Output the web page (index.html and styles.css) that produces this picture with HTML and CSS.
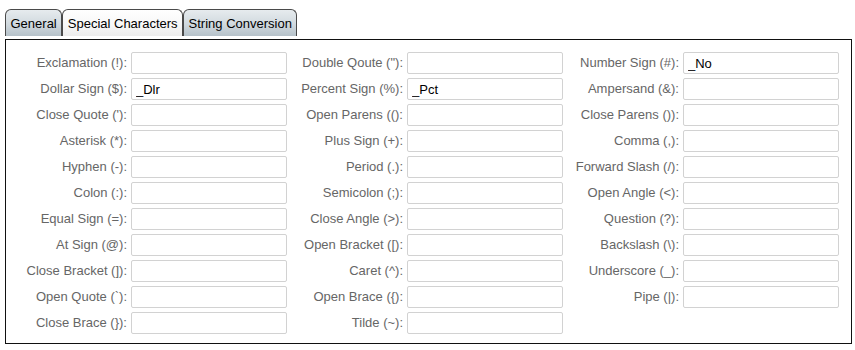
FILE: index.html
```html
<!DOCTYPE html>
<html>
<head>
<meta charset="utf-8">
<link rel="stylesheet" href="styles.css">
</head>
<body>
<div class="tabs">
  <div class="tab">General</div>
  <div class="tab active">Special Characters</div>
  <div class="tab">String Conversion</div>
</div>
<div class="panel">
  <div class="grid">
    <label class="lbl">Exclamation (!):</label><input class="fld" type="text" value="">
    <label class="lbl">Double Qoute ("):</label><input class="fld" type="text" value="">
    <label class="lbl">Number Sign (#):</label><input class="fld" type="text" value="_No">

    <label class="lbl">Dollar Sign ($):</label><input class="fld" type="text" value="_Dlr">
    <label class="lbl">Percent Sign (%):</label><input class="fld" type="text" value="_Pct">
    <label class="lbl">Ampersand (&amp;):</label><input class="fld" type="text" value="">

    <label class="lbl">Close Quote ('):</label><input class="fld" type="text" value="">
    <label class="lbl">Open Parens (():</label><input class="fld" type="text" value="">
    <label class="lbl">Close Parens ()):</label><input class="fld" type="text" value="">

    <label class="lbl">Asterisk (*):</label><input class="fld" type="text" value="">
    <label class="lbl">Plus Sign (+):</label><input class="fld" type="text" value="">
    <label class="lbl">Comma (,):</label><input class="fld" type="text" value="">

    <label class="lbl">Hyphen (-):</label><input class="fld" type="text" value="">
    <label class="lbl">Period (.):</label><input class="fld" type="text" value="">
    <label class="lbl">Forward Slash (/):</label><input class="fld" type="text" value="">

    <label class="lbl">Colon (:):</label><input class="fld" type="text" value="">
    <label class="lbl">Semicolon (;):</label><input class="fld" type="text" value="">
    <label class="lbl">Open Angle (&lt;):</label><input class="fld" type="text" value="">

    <label class="lbl">Equal Sign (=):</label><input class="fld" type="text" value="">
    <label class="lbl">Close Angle (&gt;):</label><input class="fld" type="text" value="">
    <label class="lbl">Question (?):</label><input class="fld" type="text" value="">

    <label class="lbl">At Sign (@):</label><input class="fld" type="text" value="">
    <label class="lbl">Open Bracket ([):</label><input class="fld" type="text" value="">
    <label class="lbl">Backslash (\):</label><input class="fld" type="text" value="">

    <label class="lbl">Close Bracket (]):</label><input class="fld" type="text" value="">
    <label class="lbl">Caret (^):</label><input class="fld" type="text" value="">
    <label class="lbl">Underscore (_):</label><input class="fld" type="text" value="">

    <label class="lbl">Open Quote (`):</label><input class="fld" type="text" value="">
    <label class="lbl">Open Brace ({):</label><input class="fld" type="text" value="">
    <label class="lbl">Pipe (|):</label><input class="fld" type="text" value="">

    <label class="lbl">Close Brace (}):</label><input class="fld" type="text" value="">
    <label class="lbl">Tilde (~):</label><input class="fld" type="text" value="">
  </div>
</div>
</body>
</html>
```

FILE: styles.css
```css
html, body {
  margin: 0;
  padding: 0;
  background: #ffffff;
  font-family: "Liberation Sans", Arial, sans-serif;
  font-size: 13px;
}

.tabs {
  display: flex;
  gap: 0;
  margin: 9px 0 3px 5px;
}

.tab {
  height: 27px;
  box-sizing: border-box;
  padding: 0 4.5px;
  line-height: 27px;
  color: #000;
  border: 1px solid #4a4a4a;
  border-bottom: none;
  border-radius: 6px 6px 0 0;
  background: linear-gradient(to bottom, #e6ebee 0%, #d3dbe0 50%, #b6c2ca 100%);
  white-space: nowrap;
}

.tab.active {
  background: linear-gradient(to bottom, #ffffff 0%, #f7f7f7 60%, #ececec 100%);
}

.panel {
  margin-left: 5px;
  width: 847px;
  box-sizing: border-box;
  border: 1px solid #111;
  padding: 12px 4px 9px 4px;
}

.grid {
  display: grid;
  grid-template-columns: 117px 156px 112px 156px 112px 156px;
  column-gap: 4px;
  row-gap: 4px;
  grid-auto-rows: 22px;
}

.lbl {
  color: #666;
  text-align: right;
  line-height: 22px;
  white-space: nowrap;
}

.fld {
  box-sizing: border-box;
  width: 156px;
  height: 22px;
  margin: 0;
  padding: 0 4px;
  border: 1px solid #d2d2d2;
  border-radius: 2px;
  background: #fff;
  font-family: "Liberation Sans", Arial, sans-serif;
  font-size: 13px;
  color: #000;
  outline: none;
}
```
